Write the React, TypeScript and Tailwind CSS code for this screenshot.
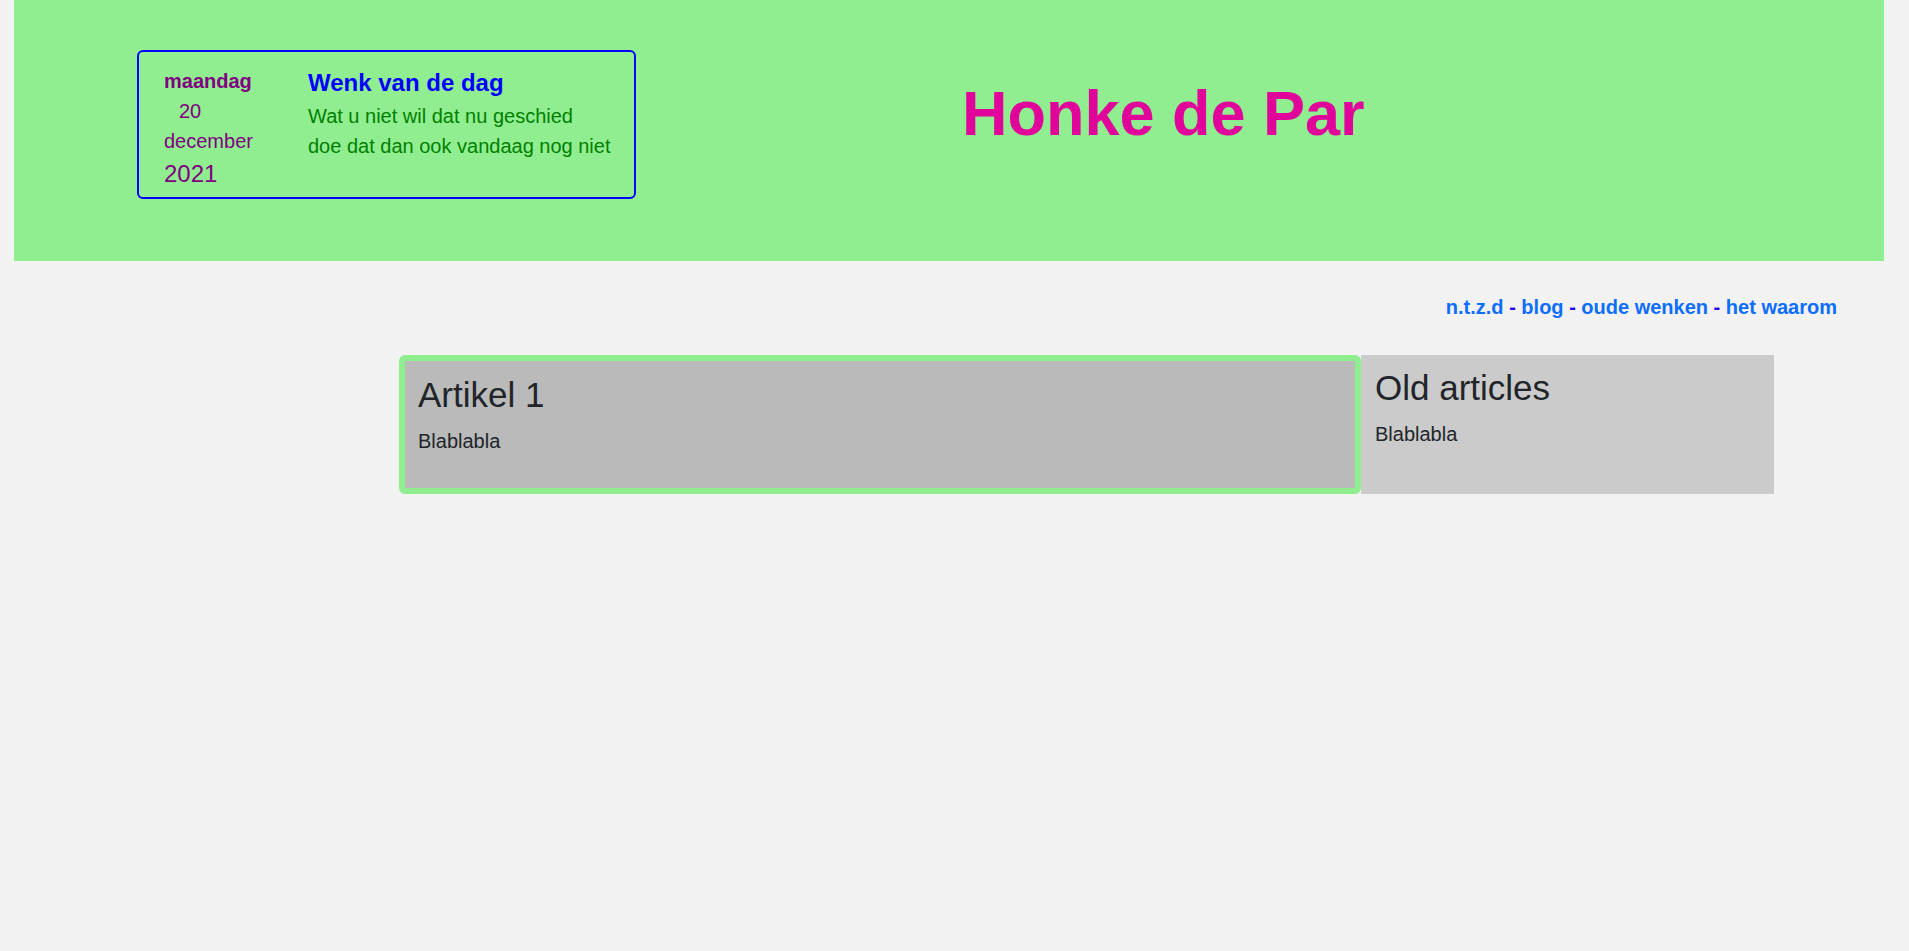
import React from 'react';

const font = { fontFamily: '"Liberation Sans", Arial, sans-serif' };

const Header: React.FC = () => (
  <header className="ml-[14px] w-[1870px] h-[261px] bg-[#90ee90] flex items-start">
    {/* Datum + wenk van de dag */}
    <div className="ml-[123px] mt-[50px] w-[499px] h-[149px] border-2 border-[#0000ff] rounded-[6px] flex pl-[25px] pt-[13px]">
      <div className="w-[144px] text-[#800080] text-[20px] leading-[30px] pt-[1px]">
        <div className="font-bold">maandag</div>
        <div className="pl-[15px]">20</div>
        <div>december</div>
        <div className="text-[24px] leading-[36px]">2021</div>
      </div>
      <div>
        <div className="text-[#0000ff] font-bold text-[24px] leading-[36px]">Wenk van de dag</div>
        <div className="text-[#008000] text-[20px] leading-[30px]">
          Wat u niet wil dat nu geschied
          <br />
          doe dat dan ook vandaag nog niet
        </div>
      </div>
    </div>
    <h1 className="ml-[326px] mt-[77px] text-[63px] font-bold text-[#e0049a] leading-[72px] whitespace-nowrap">
      Honke de Par
    </h1>
  </header>
);

const Nav: React.FC = () => (
  <nav className="mt-[31px] flex justify-end pr-[72px] text-[20px] leading-[30px] font-bold">
    <a className="text-[#0d6efd]" href="#">n.t.z.d</a>
    <span className="text-[#2200ee] whitespace-pre"> - </span>
    <a className="text-[#0d6efd]" href="#">blog</a>
    <span className="text-[#2200ee] whitespace-pre"> - </span>
    <a className="text-[#0d6efd]" href="#">oude wenken</a>
    <span className="text-[#2200ee] whitespace-pre"> - </span>
    <a className="text-[#0d6efd]" href="#">het waarom</a>
  </nav>
);

export default function App() {
  return (
    <div className="min-h-screen bg-[#f2f2f2] text-[#212529]" style={font}>
      <Header />
      <Nav />
      <main className="mt-[33px] ml-[399px] flex items-stretch">
        <section className="w-[962px] bg-[#bababa] border-[6px] border-[#90ee90] rounded-[6px] pl-[13px] pt-[13px] pb-[32px]">
          <h3 className="text-[35px] leading-[42px] mb-[10px]">Artikel 1</h3>
          <p className="text-[20px] leading-[30px]">Blablabla</p>
        </section>
        <aside className="w-[413px] bg-[#cbcbcb] pl-[14px] pt-[12px]">
          <h3 className="text-[35px] leading-[42px] mb-[10px]">Old articles</h3>
          <p className="text-[20px] leading-[30px]">Blablabla</p>
        </aside>
      </main>
    </div>
  );
}
